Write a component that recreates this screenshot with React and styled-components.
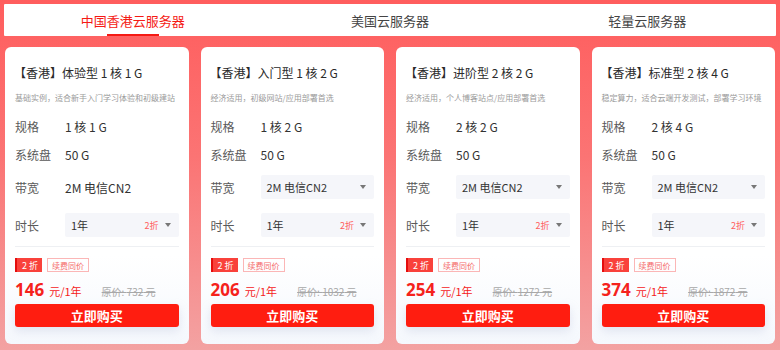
import React, { useState } from "react";
import styled, { createGlobalStyle } from "styled-components";

const Global = createGlobalStyle`
  html, body { margin: 0; padding: 0; }
  body {
    width: 780px;
    height: 350px;
    overflow: hidden;
    font-family: "Noto Sans CJK SC", "Noto Sans", sans-serif;
    background: linear-gradient(180deg, #ff5d5d 0%, #fb7474 45%, #f3a2a2 100%);
  }
  * { box-sizing: border-box; }
`;

const Page = styled.div`
  padding: 4px 4px 0;
  display: flex;
  flex-direction: column;
`;

const Tabs = styled.div`
  display: grid;
  grid-template-columns: repeat(3, 1fr);
  background: #fff;
  height: 32px;
  border-radius: 1px;
`;

const Tab = styled.div`
  position: relative;
  display: flex;
  align-items: center;
  justify-content: center;
  font-size: 13px;
  color: ${(p) => (p.$active ? "#f51a14" : "#444")};
  cursor: pointer;
  &::after {
    content: "";
    display: ${(p) => (p.$active ? "block" : "none")};
    position: absolute;
    bottom: 0;
    left: 50%;
    transform: translateX(-50%);
    width: 52px;
    height: 2px;
    background: #f51a14;
  }
`;

const Cards = styled.div`
  display: grid;
  grid-template-columns: repeat(4, 1fr);
  gap: 12px;
  padding: 11px 1px 0;
`;

const Card = styled.div`
  background: linear-gradient(180deg, #ffffff 0%, #ffffff 70%, #f5f8fd 100%);
  border-radius: 6px;
  padding: 16px 10px 15px;
  height: 297px;
  display: flex;
  flex-direction: column;
`;

const Title = styled.div`
  font-size: 12px;
  line-height: 20px;
  color: #2a2a2a;
  white-space: nowrap;
  margin-left: -1px;
`;

const Desc = styled.div`
  margin-top: 7px;
  margin-bottom: 6px;
  font-size: 8px;
  line-height: 16px;
  color: #9a9a9a;
  white-space: nowrap;
`;

const Row = styled.div`
  display: flex;
  align-items: center;
  height: ${(p) => (p.$tall ? "38px" : "28px")};
`;

const Label = styled.div`
  width: 50px;
  flex: none;
  font-size: 12px;
  color: #5a5a5a;
`;

const Value = styled.div`
  font-size: 12px;
  color: #333;
  white-space: nowrap;
`;

const Select = styled.div`
  flex: 1;
  height: 24px;
  background: #f5f6fa;
  border-radius: 2px;
  display: flex;
  align-items: center;
  padding: 0 8px 0 6px;
  font-size: 11px;
  color: #333;
`;

const SelectText = styled.span`
  flex: 1;
  white-space: nowrap;
`;

const Off = styled.span`
  font-size: 9px;
  color: #ff5d5d;
  margin-right: 6px;
`;

const Caret = styled.span`
  width: 0;
  height: 0;
  border-left: 3px solid transparent;
  border-right: 3px solid transparent;
  border-top: 4px solid #777;
`;

const Divider = styled.div`
  margin-top: 2px;
  height: 1px;
  background: #eef0f3;
`;

const Badges = styled.div`
  margin-top: 11px;
  display: flex;
  gap: 5px;
  height: 14px;
`;

const Discount = styled.span`
  display: inline-flex;
  align-items: center;
  height: 14px;
  padding: 0 4px 0 5px;
  font-size: 9px;
  color: #fff;
  background: #f9413b;
  border-left: 2px solid #e40d0d;
  white-space: nowrap;
`;

const Renew = styled.span`
  display: inline-flex;
  align-items: center;
  height: 14px;
  padding: 0 4px;
  font-size: 8px;
  color: #f56a6a;
  border: 1px solid #fbb6b6;
  white-space: nowrap;
`;

const PriceRow = styled.div`
  margin-top: 6px;
  height: 20px;
  display: flex;
  align-items: baseline;
  white-space: nowrap;
`;

const Price = styled.span`
  font-size: 17px;
  font-weight: 700;
  color: #f5221c;
  font-family: "Noto Sans", sans-serif;
`;

const Unit = styled.span`
  margin-left: 5px;
  font-size: 11px;
  color: #f5221c;
`;

const Orig = styled.span`
  margin-left: 20px;
  font-size: 10px;
  color: #a8a8a8;
  text-decoration: line-through;
`;

const Buy = styled.button`
  margin-top: 6px;
  height: 23px;
  width: 100%;
  border: none;
  border-radius: 3px;
  background: #ff1d10;
  color: #fff;
  font-family: inherit;
  font-size: 13px;
  font-weight: 700;
  box-shadow: 0 4px 10px rgba(180, 190, 215, 0.35);
  cursor: pointer;
`;

const plans = [
  { type: "体验型", spec: "1 核 1 G", desc: "基础实例，适合新手入门学习体验和初级建站", bwSelect: false, price: 146, orig: 732 },
  { type: "入门型", spec: "1 核 2 G", desc: "经济适用，初级网站/应用部署首选", bwSelect: true, price: 206, orig: 1032 },
  { type: "进阶型", spec: "2 核 2 G", desc: "经济适用，个人博客站点/应用部署首选", bwSelect: true, price: 254, orig: 1272 },
  { type: "标准型", spec: "2 核 4 G", desc: "稳定算力，适合云端开发测试，部署学习环境", bwSelect: true, price: 374, orig: 1872 },
];

export default function App() {
  const [tab, setTab] = useState(0);
  const tabs = ["中国香港云服务器", "美国云服务器", "轻量云服务器"];
  return (
    <>
      <Global />
      <Page>
        <Tabs>
          {tabs.map((t, i) => (
            <Tab key={t} $active={i === tab} onClick={() => setTab(i)}>
              {t}
            </Tab>
          ))}
        </Tabs>
        <Cards>
          {plans.map((p) => (
            <Card key={p.type}>
              <Title>【香港】{p.type} {p.spec}</Title>
              <Desc>{p.desc}</Desc>
              <Row>
                <Label>规格</Label>
                <Value>{p.spec}</Value>
              </Row>
              <Row>
                <Label>系统盘</Label>
                <Value>50 G</Value>
              </Row>
              <Row $tall>
                <Label>带宽</Label>
                {p.bwSelect ? (
                  <Select>
                    <SelectText>2M 电信CN2</SelectText>
                    <Caret />
                  </Select>
                ) : (
                  <Value>2M 电信CN2</Value>
                )}
              </Row>
              <Row $tall>
                <Label>时长</Label>
                <Select>
                  <SelectText>1年</SelectText>
                  <Off>2折</Off>
                  <Caret />
                </Select>
              </Row>
              <Divider />
              <Badges>
                <Discount>2 折</Discount>
                <Renew>续费同价</Renew>
              </Badges>
              <PriceRow>
                <Price>{p.price}</Price>
                <Unit>元/1年</Unit>
                <Orig>原价: {p.orig} 元</Orig>
              </PriceRow>
              <Buy>立即购买</Buy>
            </Card>
          ))}
        </Cards>
      </Page>
    </>
  );
}
